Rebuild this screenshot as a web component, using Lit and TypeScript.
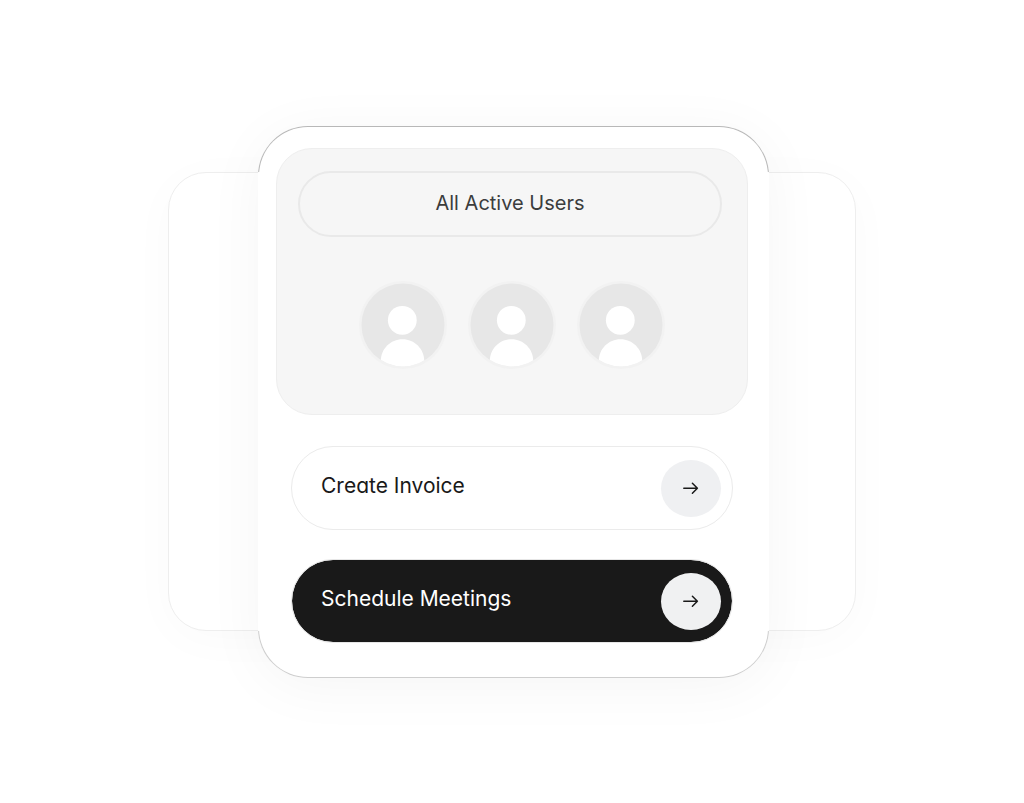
import { LitElement, html, css } from "lit";
import { customElement, property } from "lit/decorators.js";

@customElement("user-avatar")
export class UserAvatar extends LitElement {
  static styles = css`
    :host {
      display: block;
    }
    .face {
      display: block;
      width: 88px;
      height: 88px;
    }
  `;

  render() {
    return html`
      <svg class="face" viewBox="0 0 88 88" role="img" aria-label="User">
        <defs>
          <clipPath id="disc"><circle cx="44" cy="44" r="41.5" /></clipPath>
        </defs>
        <circle cx="44" cy="44" r="44" fill="#f2f2f2" />
        <circle cx="44" cy="44" r="41.5" fill="#e7e7e7" />
        <g clip-path="url(#disc)" fill="#fff">
          <circle cx="43.3" cy="39.3" r="14.4" />
          <path d="M21.8 90V80C21.8 68 31.5 58.3 43.5 58.3S65.2 68 65.2 80V90Z" />
        </g>
      </svg>
    `;
  }
}

@customElement("action-button")
export class ActionButton extends LitElement {
  @property() label = "";
  @property({ type: Boolean }) dark = false;

  static styles = css`
    :host {
      display: block;
    }
    .action {
      box-sizing: border-box;
      display: flex;
      align-items: center;
      justify-content: space-between;
      width: 100%;
      height: 84px;
      margin: 0;
      padding: 0 11px 0 29px;
      border: 1px solid #ebebeb;
      border-radius: 42px;
      background: #fff;
      color: #191919;
      font: 400 21px/28px Inter, "Liberation Sans", sans-serif;
      font-feature-settings: "cv11";
      text-align: left;
      cursor: pointer;
    }
    .dark {
      border-color: #e6e6e6;
      background: #191919;
      background-clip: padding-box;
      color: #fff;
    }
    .text {
      padding-bottom: 4px;
    }
    .badge {
      display: grid;
      place-items: center;
      width: 60px;
      height: 57px;
      border-radius: 50%;
      background: #eff0f2;
      color: #191919;
    }
    .dark .badge {
      background: #f0f1f2;
    }
    .arrow {
      display: block;
      width: 16px;
      height: 14px;
    }
  `;

  render() {
    return html`
      <button class="action ${this.dark ? "dark" : ""}" type="button">
        <span class="text">${this.label}</span>
        <span class="badge">
          <svg class="arrow" viewBox="0 0 16 14" fill="none" stroke="currentColor"
            stroke-width="1.5" stroke-linecap="round" stroke-linejoin="round" aria-hidden="true">
            <path d="M0.8 7.3H14.4M9.4 2.3L14.4 7.3L9.4 12.3" />
          </svg>
        </span>
      </button>
    `;
  }
}

@customElement("app-root")
export class AppRoot extends LitElement {
  static styles = css`
    :host {
      box-sizing: border-box;
      display: grid;
      align-items: center;
      justify-items: center;
      min-height: 100vh;
      padding: 1px 16px 0;
      background: #fff;
      font-family: Inter, "Liberation Sans", sans-serif;
    }
    .stack {
      display: grid;
      grid-template-columns: 90px minmax(0, 1fr) 87px;
      grid-template-rows: 46px auto 47px;
      width: 100%;
      max-width: 688px;
    }
    .back {
      grid-area: 2 / 1 / 3 / 4;
      border: 1px solid #eeeeee;
      border-radius: 38px;
      background: #fff;
      box-shadow: 0 8px 48px rgba(0, 0, 0, 0.022);
    }
    .card {
      grid-area: 1 / 2 / 4 / 3;
      box-sizing: border-box;
      display: flex;
      flex-direction: column;
      gap: 31px;
      padding: 21px 20px 34px 17px;
      border: 1px solid transparent;
      border-radius: 50px;
      background:
        linear-gradient(#fff, #fff) padding-box,
        linear-gradient(#b8b8b8 46px, #fff 46px, #fff calc(100% - 47px), #cecece calc(100% - 47px)) border-box;
      box-shadow: 0 8px 60px rgba(0, 0, 0, 0.045);
    }
    .panel {
      box-sizing: border-box;
      display: flex;
      flex-direction: column;
      gap: 44px;
      padding: 22px 25px 45px 21px;
      border: 1px solid #eeeeee;
      border-radius: 36px;
      background: #f6f6f6;
    }
    .title {
      margin: 0;
      padding: 17px 0 19px;
      border: 2px solid #e9e9e9;
      border-radius: 33px;
      color: #3b3d3d;
      font-size: 20px;
      font-weight: 400;
      line-height: 26px;
      text-align: center;
      font-feature-settings: "cv11";
    }
    .users {
      display: flex;
      justify-content: center;
      gap: 21px;
      margin: 0;
      padding: 0 0 0 4px;
      list-style: none;
    }
    .actions {
      display: flex;
      flex-direction: column;
      gap: 29px;
      padding: 0 15px;
    }
  `;

  render() {
    return html`
      <div class="stack">
        <div class="back"></div>
        <main class="card">
          <section class="panel">
            <h1 class="title">All Active Users</h1>
            <ul class="users">
              ${[1, 2, 3].map(() => html`<li><user-avatar></user-avatar></li>`)}
            </ul>
          </section>
          <div class="actions">
            <action-button label="Create Invoice"></action-button>
            <action-button label="Schedule Meetings" dark></action-button>
          </div>
        </main>
      </div>
    `;
  }
}
